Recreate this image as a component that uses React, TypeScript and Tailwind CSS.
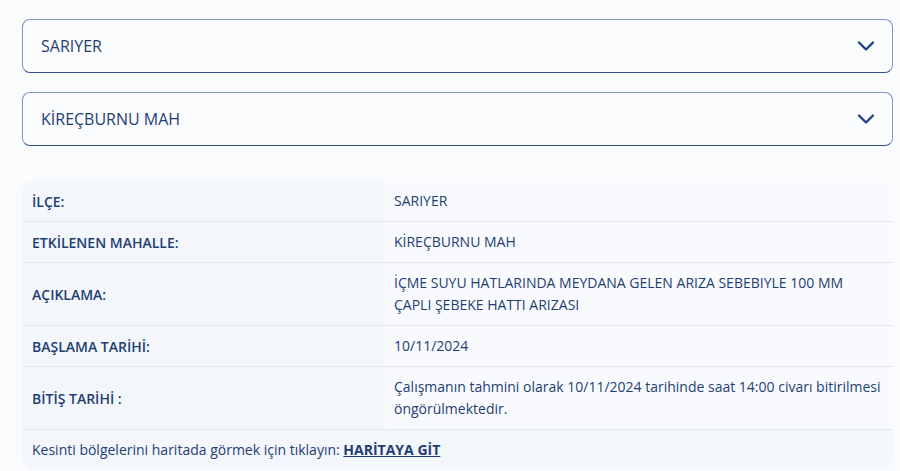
import { ChevronDown } from "lucide-react";

const rows: { label: string; value: string }[] = [
  { label: "İLÇE:", value: "SARIYER" },
  { label: "ETKİLENEN MAHALLE:", value: "KİREÇBURNU MAH" },
  {
    label: "AÇIKLAMA:",
    value: "İÇME SUYU HATLARINDA MEYDANA GELEN ARIZA SEBEBIYLE 100 MM ÇAPLI ŞEBEKE HATTI ARIZASI",
  },
  { label: "BAŞLAMA TARİHİ:", value: "10/11/2024" },
  {
    label: "BİTİŞ TARİHİ :",
    value: "Çalışmanın tahmini olarak 10/11/2024 tarihinde saat 14:00 civarı bitirilmesi öngörülmektedir.",
  },
];

function Select({ value }: { value: string }) {
  return (
    <div className="flex h-[54px] items-center justify-between rounded-lg border border-[#7f97c2] border-b-[#2f5196] bg-[#fbfcfe] pl-[18px] pr-[12px]">
      <span className="text-[16px] text-[#1f3e73]">{value}</span>
      <ChevronDown className="h-[28px] w-[28px] text-[#1e3f80]" strokeWidth={2} />
    </div>
  );
}

export default function App() {
  return (
    <div
      className="min-h-[471px] bg-[#f9fbfd] pl-[22px] pr-[7px] pt-[19px]"
      style={{ fontFamily: "'Open Sans', 'Noto Sans', sans-serif" }}
    >
      {/* Filters */}
      <div className="flex flex-col gap-[19px]">
        <Select value="SARIYER" />
        <Select value="KİREÇBURNU MAH" />
      </div>

      {/* Details */}
      <div className="mt-[35px] overflow-hidden rounded-xl bg-[#f3f6fb]">
        <table className="w-full border-collapse text-[14px] text-[#1f3e73]">
          <tbody>
            {rows.map((row) => (
              <tr key={row.label} className="border-b border-[#e3e7ed]">
                <td className="w-[363px] bg-[#f3f6fb] py-[9px] pl-[10px] align-middle leading-[21px] font-semibold">
                  {row.label}
                </td>
                <td className="bg-[#f8fafd] py-[9px] pl-[9px] pr-[10px] leading-[22px]">{row.value}</td>
              </tr>
            ))}
            <tr>
              <td colSpan={2} className="py-[9px] pl-[10px] leading-[21px]">
                Kesinti bölgelerini haritada görmek için tıklayın:{" "}
                <a href="#" className="font-bold underline">
                  HARİTAYA GİT
                </a>
              </td>
            </tr>
          </tbody>
        </table>
      </div>
    </div>
  );
}
